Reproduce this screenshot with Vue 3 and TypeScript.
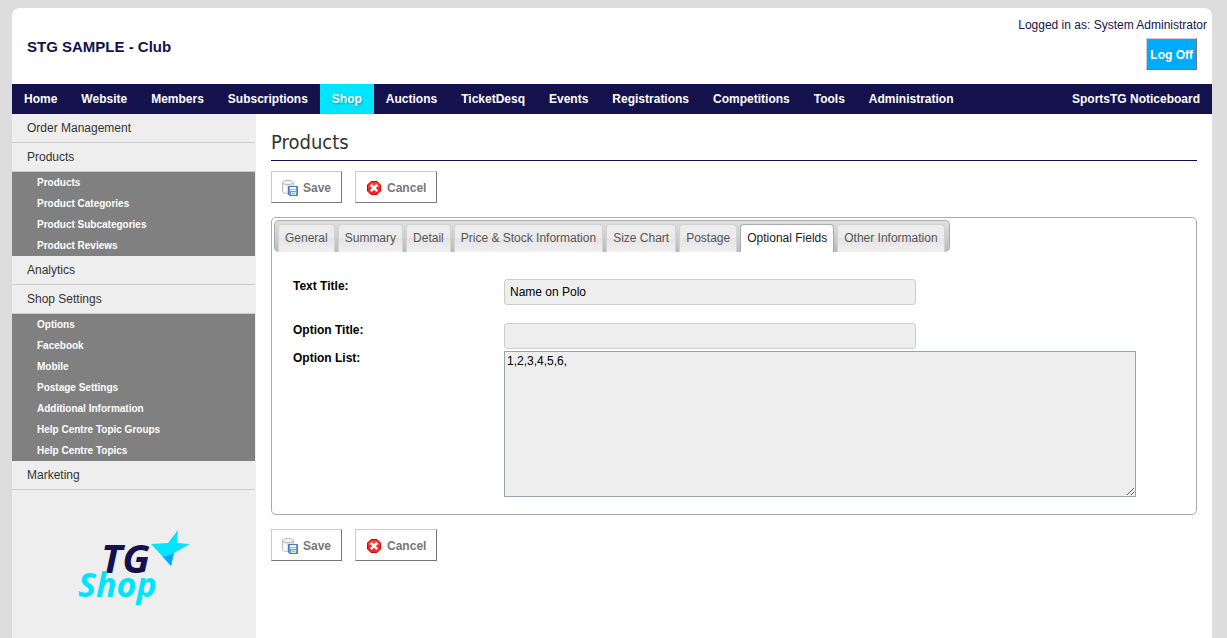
<script setup lang="ts">
import { ref } from 'vue'

interface MenuGroup {
  label: string
  children: string[]
}

const navItems: string[] = [
  'Home', 'Website', 'Members', 'Subscriptions', 'Shop', 'Auctions', 'TicketDesq',
  'Events', 'Registrations', 'Competitions', 'Tools', 'Administration',
]
const activeNav = 'Shop'

const menu: MenuGroup[] = [
  { label: 'Order Management', children: [] },
  { label: 'Products', children: ['Products', 'Product Categories', 'Product Subcategories', 'Product Reviews'] },
  { label: 'Analytics', children: [] },
  {
    label: 'Shop Settings',
    children: [
      'Options', 'Facebook', 'Mobile', 'Postage Settings', 'Additional Information',
      'Help Centre Topic Groups', 'Help Centre Topics',
    ],
  },
  { label: 'Marketing', children: [] },
]

const tabs: string[] = [
  'General', 'Summary', 'Detail', 'Price & Stock Information', 'Size Chart',
  'Postage', 'Optional Fields', 'Other Information',
]
const activeTab = ref('Optional Fields')

const textTitle = ref('Name on Polo')
const optionTitle = ref('')
const optionList = ref('1,2,3,4,5,6,')
const actionRows: string[] = ['top', 'bottom']
</script>

<template>
  <div class="shell">
    <header class="header">
      <div class="club">STG SAMPLE - Club</div>
      <div class="account">
        <span>Logged in as: System Administrator</span>
        <button type="button" class="logoff">Log Off</button>
      </div>
    </header>

    <nav class="nav">
      <a v-for="item in navItems" :key="item" href="#" :class="{ active: item === activeNav }">{{ item }}</a>
      <a href="#" class="notice">SportsTG Noticeboard</a>
    </nav>

    <div class="body">
      <aside class="sidebar">
        <ul class="menu">
          <li v-for="group in menu" :key="group.label">
            <a href="#" class="group">{{ group.label }}</a>
            <ul v-if="group.children.length" class="submenu">
              <li v-for="child in group.children" :key="child"><a href="#">{{ child }}</a></li>
            </ul>
          </li>
        </ul>
        <svg class="logo" width="120" height="84" viewBox="0 0 120 84" role="img" aria-label="TG Shop">
          <text x="25" y="47" class="logo-tg">TG</text>
          <text x="2" y="71" class="logo-shop">Shop</text>
          <path d="M75 18 L92 17 L102 4 L101 17 L114 18 L98 27 L95 40 L87 31 Z" fill="#00e5ff" />
          <path d="M87 31 L98 27 L95 40 Z" fill="#00aaff" />
        </svg>
      </aside>

      <main class="main">
        <h1>Products</h1>
        <template v-for="row in actionRows" :key="row">
          <section v-if="row === 'bottom'" class="panel">
            <div class="tabs" role="tablist">
              <button
                v-for="tab in tabs"
                :key="tab"
                type="button"
                role="tab"
                :aria-selected="tab === activeTab"
                :class="{ current: tab === activeTab }"
                @click="activeTab = tab"
              >{{ tab }}</button>
            </div>
            <form class="fields" @submit.prevent>
              <label for="text-title">Text Title:</label>
              <input id="text-title" v-model="textTitle" type="text" class="spaced">
              <label for="option-title">Option Title:</label>
              <input id="option-title" v-model="optionTitle" type="text">
              <label for="option-list">Option List:</label>
              <textarea id="option-list" v-model="optionList"></textarea>
            </form>
          </section>
          <div class="actions">
            <button type="button">
              <svg width="16" height="16" viewBox="0 0 16 16" aria-hidden="true">
                <path d="M.5 2.500v9c0 1.200 2.500 2 5.500 2s5.500-.8 5.500-2v-9" fill="#e2e2e2" stroke="#c0c0c0" />
                <path d="M1.500 5v7l3 1V6z" fill="#fff" />
                <ellipse cx="6" cy="2.500" rx="5.500" ry="2" fill="#f4f4f4" stroke="#bbb" />
                <path d="M6.500 6.500h9v9h-8l-1-1z" fill="#6b98dc" stroke="#4a78c4" />
                <path d="M8 7h6v4H8z" fill="#eef5ff" />
                <path d="M8 9.500h6" stroke="#9dbce8" />
                <path d="M9 12h5v3H9z" fill="#d8f0c4" />
                <path d="M10 13.500h3" stroke="#8cc66c" />
              </svg>
              Save
            </button>
            <button type="button">
              <svg width="16" height="16" viewBox="0 0 16 16" aria-hidden="true">
                <path d="M5 1.500h6L14.500 5v6L11 14.500H5L1.500 11V5z" fill="#f22" stroke="#d80000" />
                <path d="M5.400 2.500h5.200l2.900 2.900v2.100h-11V5.400z" fill="#ff5a50" opacity=".6" />
                <path d="M4.800 4.800l6.400 6.400M11.200 4.800l-6.400 6.400" stroke="#fff" stroke-width="2.600" />
              </svg>
              Cancel
            </button>
          </div>
        </template>
      </main>
    </div>
  </div>
</template>

<style>
body {
  margin: 0;
  background: #ddd;
}
</style>

<style scoped>
* {
  box-sizing: border-box;
}

.shell {
  display: flex;
  flex-direction: column;
  min-height: calc(100vh - 8px);
  margin: 8px 15px 0 12px;
  overflow: hidden;
  border-radius: 8px 8px 0 0;
  background: #fff;
  color: #333;
  font: 12px/16px "Liberation Sans", Arial, sans-serif;
}

a {
  text-decoration: none;
}

button,
input,
textarea {
  font: inherit;
}

.header {
  display: flex;
  justify-content: space-between;
  height: 76px;
  padding: 9px 5px 0 15px;
  color: #14124d;
}

.club {
  padding-top: 20px;
  font-size: 15px;
  line-height: 20px;
  font-weight: bold;
}

.account {
  display: flex;
  flex-direction: column;
  align-items: flex-end;
  gap: 5px;
}

.logoff {
  height: 32px;
  margin-right: 10px;
  padding: 2px 3px 0;
  border: 1px solid;
  border-color: #ccc #777 #777 #ccc;
  background: #00aaff;
  color: #fff;
  font-weight: bold;
}

.nav {
  display: flex;
  height: 30px;
  background: #14124d;
}

.nav a {
  padding: 0 12px;
  color: #fff;
  font-weight: bold;
  line-height: 30px;
  white-space: nowrap;
}

.nav .active {
  background: #00e5ff;
  text-shadow: 1px 1px 2px rgba(0, 0, 0, 0.3);
}

.nav .notice {
  margin-left: auto;
}

.body {
  display: flex;
  flex: 1;
}

.sidebar {
  flex: 0 0 244px;
  padding-right: 1px;
  background: #eee;
}

.menu,
.submenu {
  margin: 0;
  padding: 0;
  list-style: none;
}

.group {
  display: block;
  padding-left: 15px;
  border-bottom: 1px solid #ccc;
  color: #333;
  line-height: 28px;
}

.submenu {
  background: #808080;
}

.submenu a {
  display: block;
  padding-left: 25px;
  color: #fff;
  font-size: 10px;
  font-weight: bold;
  line-height: 21px;
}

.logo {
  display: block;
  margin: 36px 0 0 64px;
}

.logo-tg,
.logo-shop {
  font-family: "Open Sans", "Noto Sans", sans-serif;
  font-style: italic;
  font-weight: 700;
}

.logo-tg {
  fill: #14124d;
  font-size: 40px;
}

.logo-shop {
  fill: #00e5ff;
  font-size: 34px;
}

.main {
  flex: 1;
  min-width: 0;
  padding: 14px 15px;
}

h1 {
  margin: 0 0 10px;
  padding-bottom: 4px;
  border-bottom: 1px solid #14124d;
  font: 20px/28px "DejaVu Sans Condensed", "Open Sans", sans-serif;
}

.actions {
  display: flex;
  gap: 13px;
}

.actions button {
  display: flex;
  align-items: center;
  gap: 5px;
  height: 32px;
  padding: 2px 10px 0;
  border: 1px solid;
  border-color: #ccc #777 #777 #ccc;
  background: #fff;
  color: #777;
  font-weight: bold;
}

.panel {
  margin: 14px 0;
  padding: 2px 2px 17px;
  border: 1px solid #aaa;
  border-radius: 5px;
}

.tabs {
  display: inline-flex;
  align-items: flex-end;
  gap: 3px;
  height: 32px;
  padding: 0 4px 0 3px;
  border: 1px solid #aaa;
  border-bottom: 0;
  border-radius: 5px;
  background: linear-gradient(#e0e0e0, #bbb);
  vertical-align: top;
}

.tabs button {
  height: 28px;
  padding: 0 6px 2px;
  border: 1px solid #d3d3d3;
  border-bottom: 0;
  border-radius: 4px 4px 0 0;
  background: linear-gradient(#ececec 50%, #e4e4e4 50%, #f0f0f0);
  color: #555;
  white-space: nowrap;
}

.tabs .current {
  border-color: #aaa;
  background: #fff;
  color: #212121;
}

.fields {
  display: grid;
  grid-template-columns: 211px minmax(0, 1fr);
  align-items: start;
  row-gap: 2px;
  padding: 27px 58px 0 19px;
}

.fields label {
  color: #000;
  font-weight: bold;
  line-height: 14px;
}

.fields input {
  width: 100%;
  max-width: 412px;
  height: 26px;
  padding: 0 5px;
  border: 1px solid #ccc;
  border-radius: 3px;
  background: #eee;
  color: #000;
}

.fields .spaced {
  margin-bottom: 16px;
}

.fields textarea {
  width: 100%;
  max-width: 632px;
  height: 146px;
  padding: 2px;
  border: 1px solid #94a5b2;
  background: #eee;
  color: #000;
  line-height: 14px;
}
</style>
